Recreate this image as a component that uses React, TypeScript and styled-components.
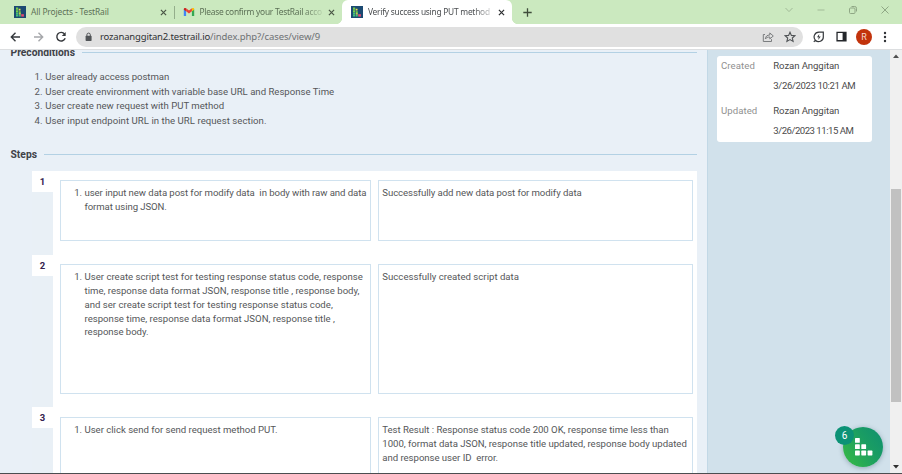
import React from 'react';
import styled, { createGlobalStyle } from 'styled-components';

const Global = createGlobalStyle`
  *, *::before, *::after { box-sizing: border-box; }
  body { margin: 0; background: #fff; overflow: hidden; }
  svg { display: block; flex: none; }
`;

const Window = styled.div`
  display: flex;
  flex-direction: column;
  width: 902px;
  height: 474px;
  overflow: hidden;
  border-bottom: 1px solid #4b4d50;
  font-family: Roboto, 'Liberation Sans', sans-serif;
  font-size: 9.6px;
  color: #555759;
`;

/* Browser chrome */
const TabStrip = styled.header`
  display: flex;
  flex: none;
  height: 24px;
  background: #cbe9bf;
  font-family: 'Noto Sans', 'Open Sans', sans-serif;
`;

const Tab = styled.div<{ $width: number; $active?: boolean; $start: number }>`
  display: flex;
  align-items: center;
  width: ${(p) => p.$width}px;
  height: 24px;
  padding-left: ${(p) => p.$start}px;
  padding-right: 7px;
  border-radius: 6px 6px 0 0;
  background: ${(p) => (p.$active ? '#fff' : 'transparent')};
  position: relative;
  ${(p) =>
    p.$active &&
    `&::before, &::after {
      content: '';
      position: absolute;
      bottom: 0;
      width: 5px;
      height: 5px;
    }
    &::before { left: -5px; background: radial-gradient(circle at 0 0, transparent 4.6px, #fff 5px); }
    &::after { right: -5px; background: radial-gradient(circle at 100% 0, transparent 4.6px, #fff 5px); }`}
`;

const TabTitle = styled.span<{ $ls: number; $gap: number; $fade?: boolean; $active?: boolean }>`
  flex: 1;
  min-width: 0;
  margin-left: ${(p) => p.$gap}px;
  margin-right: 5px;
  white-space: nowrap;
  font-size: 8.4px;
  line-height: 14px;
  letter-spacing: ${(p) => p.$ls}px;
  color: ${(p) => (p.$active ? '#4b4e51' : '#5c7056')};
  ${(p) => p.$fade && 'mask-image: linear-gradient(90deg, #000 84%, rgba(0, 0, 0, 0.15) 100%);'}
`;

const TabDivider = styled.i`
  width: 1px;
  height: 13px;
  margin-top: 6px;
  background: #94ae8b;
`;

const NewTab = styled.div`
  padding: 8px 0 0 11px;
`;

const WindowControls = styled.div`
  display: flex;
  gap: 22px;
  margin: 5px 12px 0 auto;
  height: 10px;
`;

const Toolbar = styled.div`
  display: flex;
  flex: none;
  align-items: center;
  height: 26px;
  padding: 1px 10px 1px 9px;
  background: #fff;
  border-bottom: 1px solid #dcdee0;
`;

const NavButtons = styled.div`
  display: flex;
  gap: 10px;
  width: 67px;
`;

const AddressBar = styled.div`
  display: flex;
  align-items: center;
  width: 727px;
  height: 20px;
  padding: 0 7px 0 8px;
  border-radius: 10px;
  background: #e0e0e0;
  font-family: 'Noto Sans', 'Open Sans', sans-serif;
  font-size: 9.5px;
  line-height: 20px;
  white-space: pre;
`;

const Host = styled.span`
  margin-left: 7px;
  letter-spacing: -0.17px;
  color: #2f3134;
`;

const Path = styled.span`
  flex: 1;
  letter-spacing: -0.1px;
  color: #6d7073;
`;

const AddressActions = styled.div`
  display: flex;
  gap: 10px;
`;

const Extensions = styled.div`
  display: flex;
  align-items: center;
  margin-left: 9px;
`;

const Avatar = styled.div`
  width: 16px;
  height: 16px;
  margin: 0 11px 0 9px;
  border-radius: 50%;
  background: #c2330c;
  color: #f6d9cf;
  text-align: center;
  font-size: 9px;
  line-height: 16px;
`;

const MenuGap = styled.div`
  width: 11px;
`;

/* Page */
const Page = styled.div`
  display: flex;
  flex: 1;
  min-height: 0;
  position: relative;
`;

const Main = styled.main`
  width: 707px;
  height: 423px;
  overflow: hidden;
  padding-left: 10.5px;
  padding-right: 10px;
  background: #e9f0f7;
`;

const SectionTitle = styled.h2<{ $top: number; $gap: number }>`
  display: flex;
  align-items: center;
  gap: ${(p) => p.$gap}px;
  height: 14px;
  margin: ${(p) => p.$top}px 0 0;
  font-size: 10.3px;
  line-height: 14px;
  font-weight: 700;
  color: #3f4247;
  &::after {
    content: '';
    flex: 1;
    height: 1px;
    background: #b3d1e4;
  }
`;

const TitleText = styled.span`
  padding-top: 1.4px;
`;

const Conditions = styled.div`
  margin: 11px 0 0 24px;
`;

const Item = styled.div<{ $num: number; $lh: number }>`
  display: grid;
  grid-template-columns: ${(p) => p.$num}px auto;
  line-height: ${(p) => p.$lh}px;
`;

const Line = styled.div<{ $ls: number }>`
  white-space: nowrap;
  letter-spacing: ${(p) => p.$ls}px;
`;

const StepTable = styled.div`
  margin: 10px 0 0 21.5px;
  background: #fff;
`;

const Step = styled.section<{ $height: number; $top: number; $bottom: number }>`
  display: grid;
  grid-template-columns: 21px 311px 315px;
  column-gap: 7px;
  height: ${(p) => p.$height}px;
  & > :not(:first-child) {
    margin-top: ${(p) => p.$top}px;
    margin-bottom: ${(p) => p.$bottom}px;
  }
`;

const StepRail = styled.div`
  background: #e9f0f6;
`;

const StepNumber = styled.div`
  height: 21px;
  background: #fff;
  text-align: center;
  font-size: 9.5px;
  font-weight: 700;
  line-height: 22px;
  color: #34224e;
`;

const Cell = styled.div<{ $left: number }>`
  padding: 5.2px 0 0 ${(p) => p.$left}px;
  border: 1px solid #d0e2ef;
  line-height: 13.8px;
`;

const Sidebar = styled.aside`
  width: 183px;
  padding: 6px 19px 0 9px;
  border-left: 1px solid #c2d8e6;
  background: #d1e1eb;
`;

const InfoCard = styled.dl`
  display: grid;
  grid-template-columns: 52.3px auto;
  grid-template-rows: 20px 25px 20.3px 14px;
  width: 155px;
  height: 86px;
  margin: 0;
  padding: 3px 0 0 4px;
  border-radius: 3px;
  background: #fff;
  line-height: 13.4px;
`;

const Label = styled.dt<{ $ls: number }>`
  grid-column: 1;
  letter-spacing: ${(p) => p.$ls}px;
  color: #909090;
`;

const Value = styled.dd<{ $ls: number }>`
  grid-column: 2;
  margin: 0;
  white-space: nowrap;
  letter-spacing: ${(p) => p.$ls}px;
  color: #4b4b4b;
`;

const Scrollbar = styled.div`
  display: flex;
  flex-direction: column;
  align-items: center;
  width: 12px;
  padding: 4px 0;
  background: #f0f0f0;
`;

const Thumb = styled.div`
  width: 10px;
  height: 213px;
  margin: 131px 0 auto;
  background: #c1c1c1;
`;

const HelpButton = styled.div`
  position: absolute;
  right: 19px;
  bottom: 6px;
  width: 40px;
  height: 40px;
  border-radius: 50%;
  background: linear-gradient(55deg, #32b44b 15%, #1a9d63 60%, #0f8f70);
  box-shadow: 0 1px 5px rgba(30, 60, 80, 0.35);
`;

const HelpCount = styled.span`
  position: absolute;
  left: -8px;
  top: -1px;
  width: 19px;
  height: 19px;
  border-radius: 50%;
  background: #0c9276;
  color: #fff;
  text-align: center;
  font-size: 10px;
  line-height: 19px;
`;

const HelpMark = styled.svg`
  margin: 11px 0 0 12px;
`;

const TestRailIcon = () => (
  <svg width="12" height="12" viewBox="0 0 12 12">
    <rect width="12" height="12" fill="#1c4a72" />
    <path d="M2 1.600h2.200v2.200H2zM2 4.200h2.200v2.200H2zM4.800 5.200h2v2h-2z" fill="#74cf4c" />
    <path d="M2 6.800h2.200v1.700H2zM2 8.800h2.200v1.800H2zM4.800 8.800h2v1.800h-2z" fill="#43c07a" />
    <path d="M4.700 2.800h1.800v1.800H4.700zM4.800 7.300h2v1.300h-2z" fill="#f0e150" />
    <path d="M7.200 8.200h2.700v2.400H7.200z" fill="#e84a70" />
  </svg>
);

const GmailIcon = () => (
  <svg width="12" height="12" viewBox="0 0 12 12">
    <path d="M.8 10V3.200l2.300 1.700V10z" fill="#4285f4" />
    <path d="M8.900 10V4.900l2.300-1.700V10z" fill="#34a853" />
    <path d="M8.900 5.200V2.400c1-.8 2.300-.3 2.300 1v.3z" fill="#fbbc04" />
    <path d="M3.100 5.200V2.400c-1-.8-2.300-.3-2.300 1v.3z" fill="#c5221f" />
    <path d="M3.100 5.200V2.300L6 4.600l2.900-2.300v2.900L6 7.400z" fill="#ea4335" />
  </svg>
);

const CloseIcon = ({ color = '#4a5646' }: { color?: string }) => (
  <svg width="7" height="7" viewBox="0 0 7 7" stroke={color} strokeWidth="1.2">
    <path d="M.9.9l5.200 5.200M6.100.9L.9 6.100" />
  </svg>
);

const Stroke = styled.svg<{ $color: string; $w?: number }>`
  fill: none;
  stroke: ${(p) => p.$color};
  stroke-width: ${(p) => p.$w ?? 1.3}px;
`;

const TestStep = ({
  n, height, top, bottom, action, result,
}: {
  n: number; height: number; top: number; bottom: number;
  action: [string, number][]; result: [string, number][];
}) => (
  <Step $height={height} $top={top} $bottom={bottom}>
    <StepRail><StepNumber>{n}</StepNumber></StepRail>
    <Cell $left={13.2}>
      <Item $num={10.3} $lh={13.8}>
        <span>1.</span>
        <div>{action.map(([t, ls]) => <Line key={t} $ls={ls}>{t}</Line>)}</div>
      </Item>
    </Cell>
    <Cell $left={3.3}>{result.map(([t, ls]) => <Line key={t} $ls={ls}>{t}</Line>)}</Cell>
  </Step>
);

const preconditions: [string, number][] = [
  ['User already access postman', -0.065],
  ['User create environment with variable base URL and Response Time', -0.01],
  ['User create new request with PUT method', 0.004],
  ['User input endpoint URL in the URL request section.', 0.042],
];

export default function App() {
  return (
    <Window>
      <Global />
      <TabStrip>
        <Tab $width={174} $start={14}>
          <TestRailIcon />
          <TabTitle $ls={-0.11} $gap={5}>All Projects - TestRail</TabTitle>
          <CloseIcon />
        </Tab>
        <TabDivider />
        <Tab $width={167} $start={8}>
          <GmailIcon />
          <TabTitle $ls={-0.25} $gap={4.5} $fade>Please confirm your TestRail acco</TabTitle>
          <CloseIcon />
        </Tab>
        <Tab $width={170} $start={8.5} $active>
          <TestRailIcon />
          <TabTitle $ls={-0.25} $gap={5.5} $fade $active>Verify success using PUT method</TabTitle>
          <CloseIcon color="#2d2f31" />
        </Tab>
        <NewTab>
          <Stroke width="9" height="9" viewBox="0 0 9 9" $color="#3f4c3b"><path d="M4.500.3v8.400M.3 4.500h8.400" /></Stroke>
        </NewTab>
        <WindowControls>
          <Stroke width="10" height="10" viewBox="0 0 10 10" $color="#a2bb98" $w={1}><path d="M1.500 3l3.500 3.600L8.500 3" /></Stroke>
          <Stroke width="10" height="10" viewBox="0 0 10 10" $color="#a2bb98" $w={1}><path d="M1.500 5h7" /></Stroke>
          <Stroke width="10" height="10" viewBox="0 0 10 10" $color="#8fa785" $w={1}>
            <rect x="1.500" y="3" width="5.500" height="5.500" rx="1" /><path d="M3.500 1.500h3.200q1.800 0 1.800 1.800v3.200" />
          </Stroke>
          <Stroke width="10" height="10" viewBox="0 0 10 10" $color="#8fa785" $w={1}><path d="M1.500 1.500l7 7M8.500 1.500l-7 7" /></Stroke>
        </WindowControls>
      </TabStrip>

      <Toolbar>
        <NavButtons>
          <Stroke width="13" height="12" viewBox="0 0 13 12" $color="#35383c" $w={1.4}><path d="M11 6H2.500M6.500 1.800L2.300 6l4.200 4.200" /></Stroke>
          <Stroke width="13" height="12" viewBox="0 0 13 12" $color="#a5a7aa" $w={1.4}><path d="M2 6h8.500M6.500 1.800L10.700 6l-4.200 4.200" /></Stroke>
          <Stroke width="12" height="12" viewBox="0 0 12 12" $color="#35383c" $w={1.4}>
            <path d="M9.600 3.100A4.300 4.300 0 1 0 10.200 7.200" /><path d="M10.700 1v3.900H6.800z" fill="#35383c" stroke="none" />
          </Stroke>
        </NavButtons>
        <AddressBar>
          <svg width="9" height="10" viewBox="0 0 9 10">
            <rect x="1.600" y="3.800" width="6" height="5.200" rx=".7" fill="#515457" />
            <path d="M2.900 4V2.800a1.700 1.700 0 0 1 3.400 0V4" fill="none" stroke="#515457" />
          </svg>
          <Host>rozananggitan2.testrail.io</Host>
          <Path>/index.php?/cases/view/9</Path>
          <AddressActions>
            <Stroke width="12" height="12" viewBox="0 0 12 12" $color="#7b7d7f" $w={1}>
              <path d="M3 3.500H1.300v7h8.200V8.200M3.300 8c.3-2.700 1.800-4 4.500-4V1.900L11.300 5 7.800 7.900V6C5.700 6 4.300 6.600 3.300 8z" />
            </Stroke>
            <Stroke width="12" height="12" viewBox="0 0 12 12" $color="#505356" $w={1.1}>
              <path d="M6 1.200l1.400 3.200 3.500.3-2.600 2.300.8 3.400L6 8.600l-3.100 1.800.8-3.400L1.100 4.700l3.500-.3z" />
            </Stroke>
          </AddressActions>
        </AddressBar>
        <Extensions>
          <Stroke width="13" height="12" viewBox="0 0 13 12" $color="#35383c" $w={1.2}>
            <path d="M11.300 1.200v4.900a4.600 4.400 0 0 1-7.900 3.100C.8 6.400 2.300 1.200 7 1.200zM3.600 9L1.800 10.800" />
            <path d="M7.300 3L5 6.300h1.700L6.200 9l2.500-3.500H6.900z" fill="#35383c" stroke="none" />
          </Stroke>
          <MenuGap />
          <svg width="11" height="11" viewBox="0 0 11 11">
            <path d="M.4.8h10.200v9.600H.4zM1.700 2.100v7h4.900v-7z" fill="#24272b" fillRule="evenodd" />
          </svg>
          <Avatar>R</Avatar>
          <svg width="4" height="12" viewBox="0 0 4 12" fill="#303236">
            <circle cx="2" cy="2" r="1.200" /><circle cx="2" cy="6" r="1.200" /><circle cx="2" cy="10" r="1.200" />
          </svg>
        </Extensions>
      </Toolbar>

      <Page>
        <Main>
          <SectionTitle $top={-5} $gap={7.5}><TitleText>Preconditions</TitleText></SectionTitle>
          <Conditions>
            {preconditions.map(([t, ls], i) => (
              <Item key={t} $num={10.7} $lh={14.65}><span>{i + 1}.</span><Line $ls={ls}>{t}</Line></Item>
            ))}
          </Conditions>
          <SectionTitle $top={18.400} $gap={7}><TitleText>Steps</TitleText></SectionTitle>
          <StepTable>
            <TestStep
              n={1} height={84} top={9} bottom={14}
              action={[
                ['user input new data post for modify data\u00a0 in body with raw and data', -0.063],
                ['format using JSON.', -0.084],
              ]}
              result={[['Successfully add new data post for modify data', -0.072]]}
            />
            <TestStep
              n={2} height={152} top={9} bottom={13}
              action={[
                ['User create script test for testing response status code, response', 0.008],
                ['time, response data format JSON, response title , response body,', 0.004],
                ['and ser create script test for testing response status code,', 0.003],
                ['response time, response data format JSON, response title ,', 0.006],
                ['response body.', -0.045],
              ]}
              result={[['Successfully created script data', 0.016]]}
            />
            <TestStep
              n={3} height={100} top={10} bottom={13}
              action={[['User click send for send request method PUT.', -0.018]]}
              result={[
                ['Test Result : Response status code 200 OK, response time less than', -0.035],
                ['1000, format data JSON, response title updated, response body updated', -0.028],
                ['and response user ID\u00a0 error.', -0.039],
              ]}
            />
          </StepTable>
        </Main>
        <Sidebar>
          <InfoCard>
            <Label $ls={0.092}>Created</Label>
            <Value $ls={-0.093}>Rozan Anggitan</Value>
            <Value $ls={-0.386}>3/26/2023 10:21 AM</Value>
            <Label $ls={0.061}>Updated</Label>
            <Value $ls={-0.093}>Rozan Anggitan</Value>
            <Value $ls={-0.497}>3/26/2023 11:15 AM</Value>
          </InfoCard>
        </Sidebar>
        <Scrollbar>
          <svg width="6" height="4" viewBox="0 0 6 4"><path d="M0 4l3-3.500L6 4z" fill="#505050" /></svg>
          <Thumb />
          <svg width="6" height="4" viewBox="0 0 6 4"><path d="M0 0l3 3.500L6 0z" fill="#303030" /></svg>
        </Scrollbar>
        <HelpButton>
          <HelpMark width="18" height="18" viewBox="0 0 18 18" fill="#fff">
            <rect x="0" y="0" width="4.800" height="4.800" rx=".6" />
            <rect x="0" y="6.300" width="4.800" height="4.800" rx=".6" />
            <rect x="6.300" y="6.300" width="4.800" height="4.800" rx=".6" />
            <rect x="0" y="12.600" width="4.800" height="4.800" rx=".6" />
            <rect x="6.300" y="12.600" width="4.800" height="4.800" rx=".6" />
            <rect x="12.600" y="12.600" width="4.800" height="4.800" rx=".6" />
          </HelpMark>
          <HelpCount>6</HelpCount>
        </HelpButton>
      </Page>
    </Window>
  );
}
